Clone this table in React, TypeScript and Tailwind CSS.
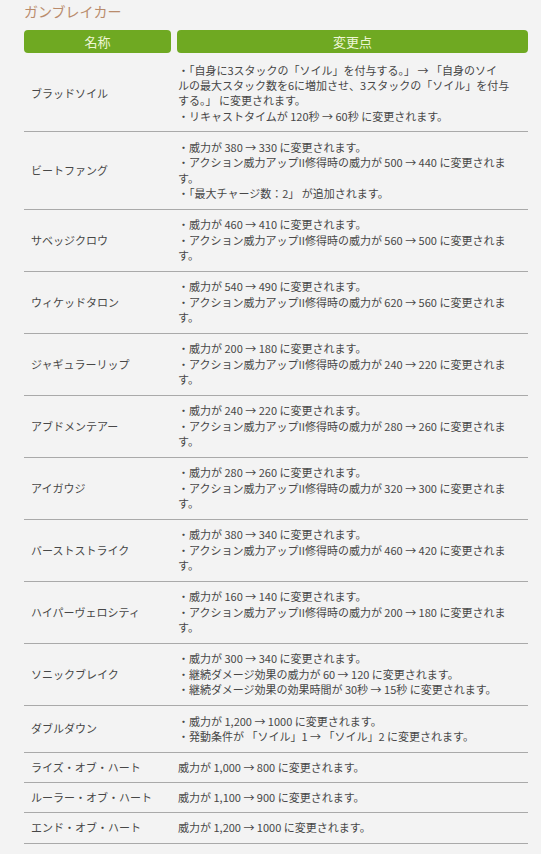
import React from "react";

type Row = { name: string; lines: string[] };

const rows: Row[] = [
  {
    name: "ブラッドソイル",
    lines: [
      "・「自身に3スタックの「ソイル」を付与する。」 → 「自身のソイ",
      "ルの最大スタック数を6に増加させ、3スタックの「ソイル」を付与",
      "する。」 に変更されます。",
      "・リキャストタイムが 120秒 → 60秒 に変更されます。",
    ],
  },
  {
    name: "ビートファング",
    lines: [
      "・威力が 380 → 330 に変更されます。",
      "・アクション威力アップII修得時の威力が 500 → 440 に変更されま",
      "す。",
      "・「最大チャージ数：2」 が追加されます。",
    ],
  },
  {
    name: "サベッジクロウ",
    lines: [
      "・威力が 460 → 410 に変更されます。",
      "・アクション威力アップII修得時の威力が 560 → 500 に変更されま",
      "す。",
    ],
  },
  {
    name: "ウィケッドタロン",
    lines: [
      "・威力が 540 → 490 に変更されます。",
      "・アクション威力アップII修得時の威力が 620 → 560 に変更されま",
      "す。",
    ],
  },
  {
    name: "ジャギュラーリップ",
    lines: [
      "・威力が 200 → 180 に変更されます。",
      "・アクション威力アップII修得時の威力が 240 → 220 に変更されま",
      "す。",
    ],
  },
  {
    name: "アブドメンテアー",
    lines: [
      "・威力が 240 → 220 に変更されます。",
      "・アクション威力アップII修得時の威力が 280 → 260 に変更されま",
      "す。",
    ],
  },
  {
    name: "アイガウジ",
    lines: [
      "・威力が 280 → 260 に変更されます。",
      "・アクション威力アップII修得時の威力が 320 → 300 に変更されま",
      "す。",
    ],
  },
  {
    name: "バーストストライク",
    lines: [
      "・威力が 380 → 340 に変更されます。",
      "・アクション威力アップII修得時の威力が 460 → 420 に変更されま",
      "す。",
    ],
  },
  {
    name: "ハイパーヴェロシティ",
    lines: [
      "・威力が 160 → 140 に変更されます。",
      "・アクション威力アップII修得時の威力が 200 → 180 に変更されま",
      "す。",
    ],
  },
  {
    name: "ソニックブレイク",
    lines: [
      "・威力が 300 → 340 に変更されます。",
      "・継続ダメージ効果の威力が 60 → 120 に変更されます。",
      "・継続ダメージ効果の効果時間が 30秒 → 15秒 に変更されます。",
    ],
  },
  {
    name: "ダブルダウン",
    lines: [
      "・威力が 1,200 → 1000 に変更されます。",
      "・発動条件が 「ソイル」1 → 「ソイル」2 に変更されます。",
    ],
  },
  { name: "ライズ・オブ・ハート", lines: ["威力が 1,000 → 800 に変更されます。"] },
  { name: "ルーラー・オブ・ハート", lines: ["威力が 1,100 → 900 に変更されます。"] },
  { name: "エンド・オブ・ハート", lines: ["威力が 1,200 → 1000 に変更されます。"] },
];

const App = () => {
  return (
    <div className="min-h-screen bg-[#f3f3f3] pl-[24px] pr-[13px] font-['Noto_Sans_CJK_JP',sans-serif] text-[#474747]">
      <div className="text-[14px] leading-[22px] text-[#b98b6c]">ガンブレイカー</div>
      <div className="mt-[8px] grid grid-cols-[147px_1fr] gap-x-[6px]">
        <div className="h-[23px] rounded-[4px] bg-[#6fa922] flex items-center justify-center text-[13px] text-[#eef6d6]">
          名称
        </div>
        <div className="h-[23px] rounded-[4px] bg-[#6fa922] flex items-center justify-center text-[13px] text-[#eef6d6]">
          変更点
        </div>
      </div>
      <div className="mt-[2px]">
        {rows.map((row) => (
          <div
            key={row.name}
            className="grid grid-cols-[153px_1fr] border-b border-[#a9a9a9] text-[11px] leading-[15.35px]"
          >
            <div className="flex items-center pl-[7px]">{row.name}</div>
            <div className={row.lines.length === 1 ? "py-[7px] pl-[1px]" : "py-[7.5px] pl-[1px]"}>
              {row.lines.map((line, i) => (
                <div key={i} className="whitespace-nowrap">
                  {line}
                </div>
              ))}
            </div>
          </div>
        ))}
      </div>
    </div>
  );
};

export default App;
